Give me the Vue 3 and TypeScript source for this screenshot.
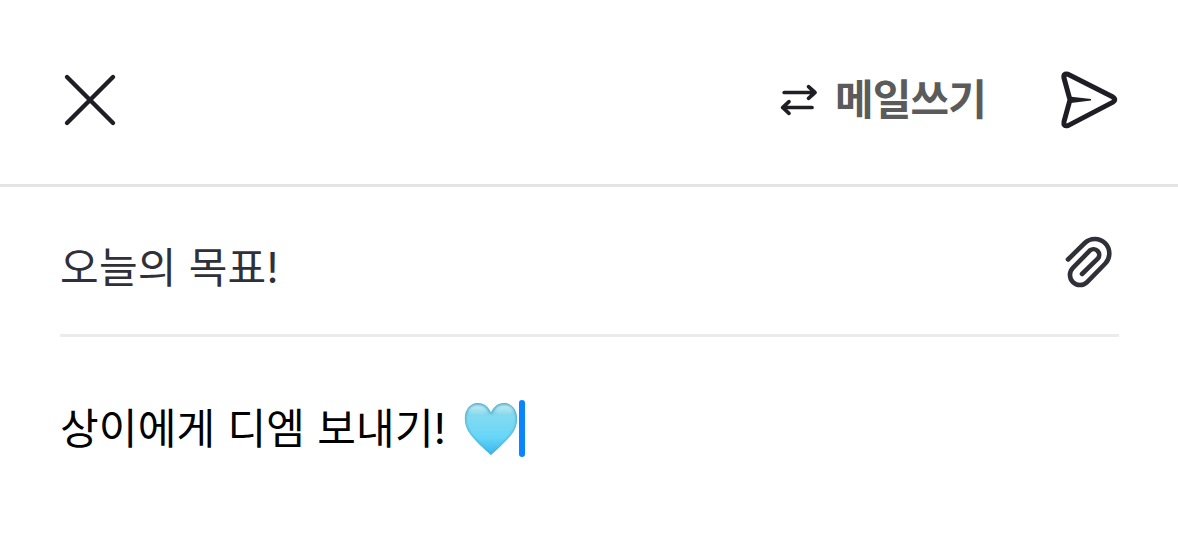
<script setup lang="ts">
import { ref } from 'vue'

const modeLabel = ref('메일쓰기')
const subject = ref('오늘의 목표!')
const message = ref('상이에게 디엠 보내기!')
</script>

<template>
  <main class="compose">
    <header class="toolbar">
      <button class="icon-button close" aria-label="닫기">
        <svg width="60" height="60" viewBox="0 0 60 60">
          <path d="M7 7 53 53M53 7 7 53" stroke-width="4.4" />
        </svg>
      </button>
      <div class="actions">
        <button class="mode">
          <svg width="40" height="34" viewBox="0 0 40 34">
            <path d="M5.2 9.5H36M29.5 3.7 36 9.5 29.5 15.3M33 24.5H3.6M10 18.7 3.6 24.5 10 30.3" stroke-width="3.7" />
          </svg>
          <span class="mode-label">{{ modeLabel }}</span>
        </button>
        <button class="icon-button send" aria-label="보내기">
          <svg width="60" height="64" viewBox="0 0 60 64">
            <path d="M9 6.2 53.5 28.8Q58 31.6 53.500 34.4L9 57.6Q4 58.8 5 53.7L11 31.9 5 10Q4 5 9 6.2Z" stroke-width="5" />
            <path class="fold" d="M10 28.5 32 31.1V32.5L10 35.2Z" />
          </svg>
        </button>
      </div>
    </header>
    <section class="content">
      <div class="subject-row">
        <span class="subject">{{ subject }}</span>
        <svg class="clip" width="54" height="60" viewBox="0 0 54 60">
          <path d="M3 28.5 19.8 12a14.5 14.5 0 0 1 20.5 20.5L22.1 51.1A10 10 0 0 1 7.9 36.9L25 19.4a5.7 5.7 0 0 1 8 8L17 43" stroke-width="4.6" />
        </svg>
      </div>
      <div class="message-row">
        <span class="message">{{ message }}</span>
        <svg class="heart" width="54" height="54" viewBox="0 0 54 54">
          <defs>
            <linearGradient id="heartFill" x1="0" y1="0" x2="0" y2="1">
              <stop offset="0" stop-color="#86d2e4" />
              <stop offset=".3" stop-color="#80daf1" />
              <stop offset=".65" stop-color="#68d6f8" />
              <stop offset="1" stop-color="#35b3ea" />
            </linearGradient>
            <linearGradient id="heartShine" x1="0" y1="0" x2="0" y2="1">
              <stop offset="0" stop-color="#fff" stop-opacity=".5" />
              <stop offset="1" stop-color="#fff" stop-opacity="0" />
            </linearGradient>
            <linearGradient id="heartRim" x1="0" y1="0" x2="0" y2="1">
              <stop offset="0" stop-color="#4398ae" />
              <stop offset=".6" stop-color="#4fb3d0" />
              <stop offset="1" stop-color="#3fb5e6" />
            </linearGradient>
            <clipPath id="heartClip">
              <path d="M27 53C25 51 14 42 6.5 32.5C-4 19 1 1 14 1C20 1 25 5 27 11C29 5 34 1 40 1C53 1 58 19 47.5 32.5C40 42 29 51 27 53Z" />
            </clipPath>
            <filter id="heartSoft" x="-20%" y="-20%" width="140%" height="140%"><feGaussianBlur stdDeviation="1" /></filter>
          </defs>
          <g clip-path="url(#heartClip)">
            <rect width="54" height="54" fill="url(#heartFill)" />
            <path class="rim" d="M27 53C25 51 14 42 6.5 32.5C-4 19 1 1 14 1C20 1 25 5 27 11C29 5 34 1 40 1C53 1 58 19 47.5 32.5C40 42 29 51 27 53Z" filter="url(#heartSoft)" />
            <ellipse cx="13.5" cy="8.5" rx="9" ry="5" fill="url(#heartShine)" filter="url(#heartSoft)" />
            <ellipse cx="40.5" cy="8.5" rx="9" ry="5" fill="url(#heartShine)" filter="url(#heartSoft)" />
          </g>
        </svg>
        <span class="caret"></span>
      </div>
    </section>
  </main>
</template>

<style>
body {
  margin: 0;
  background: #fff;
}
</style>

<style scoped>
.compose {
  width: 100%;
  height: 553px;
  overflow: hidden;
  background: #fff;
  font-family: Inter, "Noto Sans CJK KR", sans-serif;
}

button {
  padding: 0;
  border: 0;
  background: none;
  font: inherit;
}

svg {
  display: block;
  flex: none;
  overflow: visible;
}

path {
  fill: none;
  stroke: #1f1e25;
  stroke-linecap: round;
  stroke-linejoin: round;
}

.toolbar {
  display: flex;
  align-items: center;
  justify-content: space-between;
  box-sizing: border-box;
  height: 187px;
  padding: 16px 59px 0 60px;
  border-bottom: 3px solid #e4e4e5;
}

.actions,
.mode {
  display: flex;
  align-items: center;
}

.mode-label {
  width: 151px;
  margin-left: 16px;
  color: #5b5b5b;
  font-size: 42px;
  font-weight: 700;
  line-height: 60px;
  letter-spacing: -0.9px;
  text-align: left;
  white-space: nowrap;
}

.send {
  margin-left: 73px;
}

.send .fold {
  fill: #1f1e25;
  stroke: none;
}

.content {
  padding: 0 59px 0 60px;
}

.subject-row {
  display: flex;
  align-items: center;
  justify-content: space-between;
  box-sizing: border-box;
  height: 150px;
  border-bottom: 3px solid #ebebed;
}

.subject {
  color: #303038;
  font-size: 42px;
  line-height: 60px;
  letter-spacing: 0.25px;
  padding-top: 14px;
}

.clip path {
  stroke: #303038;
}

.message-row {
  display: flex;
  align-items: center;
  height: 57px;
  margin-top: 63px;
}

.message {
  width: 404px;
  color: #000;
  font-size: 42px;
  line-height: 57px;
  letter-spacing: 0.22px;
  white-space: nowrap;
}

.heart .rim {
  stroke: url(#heartRim);
  stroke-width: 2;
}

.caret {
  width: 6px;
  height: 57px;
  margin-left: 1px;
  border-radius: 3px;
  background: #0a84ff;
}
</style>
